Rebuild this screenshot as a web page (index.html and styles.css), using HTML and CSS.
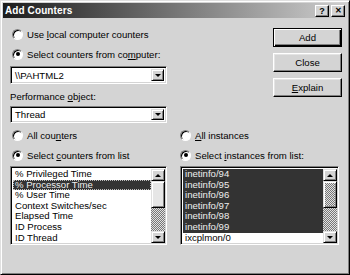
FILE: index.html
```html
<!DOCTYPE html>
<html>
<head>
<meta charset="utf-8">
<link rel="stylesheet" href="styles.css">
</head>
<body>
<div class="window">
  <div class="titlebar">
    <span class="title">Add Counters</span>
    <div class="tbtns"><span class="tbtn">?</span><span class="tbtn x">&#x2715;</span></div>
  </div>
  <div class="content">
    <div class="top">
      <div class="leftcol">
        <div class="opt"><span class="radio"></span><span>Use <u>l</u>ocal computer counters</span></div>
        <div class="opt"><span class="radio on"></span><span>Select counters from co<u>m</u>puter:</span></div>
        <div class="combo c1"><span class="val">\\PAHTML2</span><span class="drop"><span class="arr down"></span></span></div>
        <div class="lbl">Performance <u>o</u>bject:</div>
        <div class="combo c2"><span class="val">Thread</span><span class="drop"><span class="arr down"></span></span></div>
      </div>
      <div class="buttons">
        <div class="btn default">Add</div>
        <div class="btn">Close</div>
        <div class="btn"><span><u>E</u>xplain</span></div>
      </div>
    </div>
    <div class="bottom">
      <div class="col left">
        <div class="opt"><span class="radio"></span><span>All cou<u>n</u>ters</span></div>
        <div class="opt"><span class="radio on"></span><span>Select <u>c</u>ounters from list</span></div>
        <div class="listbox">
          <div class="items">
            <div class="item">% Privileged Time</div>
            <div class="item sel focus">% Processor Time</div>
            <div class="item">% User Time</div>
            <div class="item">Context Switches/sec</div>
            <div class="item">Elapsed Time</div>
            <div class="item">ID Process</div>
            <div class="item">ID Thread</div>
          </div>
          <div class="sbar">
            <div class="sbtn"><span class="arr up"></span></div>
            <div class="thumb"></div>
            <div class="track"></div>
            <div class="sbtn"><span class="arr down"></span></div>
          </div>
        </div>
      </div>
      <div class="col right">
        <div class="opt"><span class="radio"></span><span><u>A</u>ll instances</span></div>
        <div class="opt"><span class="radio on"></span><span>Select <u>i</u>nstances from list:</span></div>
        <div class="listbox">
          <div class="items">
            <div class="item sel">inetinfo/94</div>
            <div class="item sel">inetinfo/95</div>
            <div class="item sel">inetinfo/96</div>
            <div class="item sel">inetinfo/97</div>
            <div class="item sel">inetinfo/98</div>
            <div class="item sel">inetinfo/99</div>
            <div class="item">ixcplmon/0</div>
          </div>
          <div class="sbar">
            <div class="sbtn"><span class="arr up"></span></div>
            <div class="thumb dith"></div>
            <div class="track"></div>
            <div class="sbtn"><span class="arr down"></span></div>
          </div>
        </div>
      </div>
    </div>
  </div>
</div>
</body>
</html>
```

FILE: styles.css
```css
* { box-sizing: border-box; margin: 0; padding: 0; }
html, body { width: 350px; height: 275px; overflow: hidden; background: #d4d4d4; }
body { font-family: "Liberation Sans", Arial, sans-serif; font-size: 9.6px; color: #000; }
u { text-decoration: underline; text-underline-offset: 1px; }

.window {
  width: 350px; height: 275px;
  border: 1px solid; border-color: #e0e0e0 #000 #000 #e0e0e0;
  box-shadow: inset 1px 1px #fff, inset -1px -1px #808080;
  padding: 2px;
  display: flex; flex-direction: column;
  background: #d4d4d4;
}
.titlebar {
  height: 15px; flex: none;
  display: flex; align-items: center; justify-content: space-between;
  background: linear-gradient(to right, #1c1c1c 0%, #cfcfcf 100%);
  padding: 0 2px;
}
.title { color: #fff; font-weight: bold; font-size: 10px; letter-spacing: 0.1px; }
.tbtns { display: flex; gap: 2px; }
.tbtn {
  width: 14px; height: 12px;
  background: #d4d4d4;
  border: 1px solid; border-color: #fff #000 #000 #fff;
  box-shadow: inset -1px -1px #808080;
  font-weight: bold; font-size: 9px; line-height: 10px; text-align: center;
}
.tbtn.x { font-size: 8px; }

.content { flex: 1; padding: 9px 5px 0 7px; }
.top { display: flex; justify-content: space-between; }
.leftcol { width: 157px; display: flex; flex-direction: column; }

.opt { height: 14px; display: flex; align-items: center; gap: 4px; padding-left: 2px; white-space: nowrap; }
.opt + .opt { margin-top: 6px; }
.radio {
  width: 11px; height: 11px; flex: none; border-radius: 50%;
  background: #fff;
  border: 1px solid; border-color: #808080 #fff #fff #808080;
  box-shadow: inset 1px 1px #000;
  position: relative;
}
.radio.on::after {
  content: ""; position: absolute; left: 2.5px; top: 2.5px;
  width: 4px; height: 4px; border-radius: 50%; background: #000;
}

.combo {
  height: 18px; margin-top: 5px;
  display: flex; align-items: stretch;
  background: #fff;
  border: 1px solid; border-color: #808080 #fff #fff #808080;
  box-shadow: inset 1px 1px #000, inset -1px -1px #d4d4d4;
  padding: 2px;
}
.combo.c2 { height: 17px; margin-top: 3px; }
.combo .val { flex: 1; padding-left: 2px; display: flex; align-items: center; }
.drop {
  width: 13px; flex: none;
  background: #d4d4d4;
  border: 1px solid; border-color: #e0e0e0 #000 #000 #e0e0e0;
  box-shadow: inset 1px 1px #fff, inset -1px -1px #808080;
  display: flex; align-items: center; justify-content: center;
}
.arr { width: 0; height: 0; border-left: 3px solid transparent; border-right: 3px solid transparent; }
.arr.down { border-top: 3px solid #000; }
.arr.up { border-bottom: 3px solid #000; }

.lbl { margin-top: 7px; height: 12px; line-height: 12px; white-space: nowrap; }

.buttons { margin-top: 1px; display: flex; flex-direction: column; gap: 6px; width: 69px; }
.btn {
  height: 19px;
  display: flex; align-items: center; justify-content: center;
  background: #d4d4d4;
  border: 1px solid; border-color: #fff #000 #000 #fff;
  box-shadow: inset -1px -1px #808080, inset 1px 1px #e4e4e4;
}
.btn.default {
  border: 1px solid #000;
  box-shadow: inset 1px 1px #fff, inset -1px -1px #000, inset -2px -2px #808080;
}

.bottom { display: flex; gap: 13px; margin-top: 5px; }
.col { display: flex; flex-direction: column; }
.col.left { width: 157px; }
.col.right { width: 159px; }
.col.right .opt { padding-left: 0; }

.listbox {
  margin-top: 4px; height: 79px;
  display: flex;
  background: #fff;
  border: 1px solid; border-color: #808080 #fff #fff #808080;
  box-shadow: inset 1px 1px #000, inset -1px -1px #d4d4d4;
  padding: 2px 1px 1px 2px;
}
.items { flex: 1; overflow: hidden; }
.item { height: 10.6px; line-height: 10.6px; padding-left: 2px; white-space: nowrap; }
.item.sel { background: #333; color: #eee; }
.item.focus { outline: 1px dotted #bbb; outline-offset: -1px; }

.sbar { width: 14px; flex: none; display: flex; flex-direction: column; }
.sbtn {
  height: 12px; flex: none;
  background: #d4d4d4;
  border: 1px solid; border-color: #e0e0e0 #000 #000 #e0e0e0;
  box-shadow: inset 1px 1px #fff, inset -1px -1px #808080;
  display: flex; align-items: center; justify-content: center;
}
.thumb {
  height: 27px; flex: none;
  background: #e6e6e6;
  border: 1px solid; border-color: #e0e0e0 #000 #000 #e0e0e0;
  box-shadow: inset 1px 1px #fff, inset -1px -1px #808080;
}
.thumb.dith, .track {
  background: repeating-conic-gradient(#e2e2e2 0 25%, #777 0 50%) 0 0 / 2px 2px;
}
.track { flex: 1; }
```
